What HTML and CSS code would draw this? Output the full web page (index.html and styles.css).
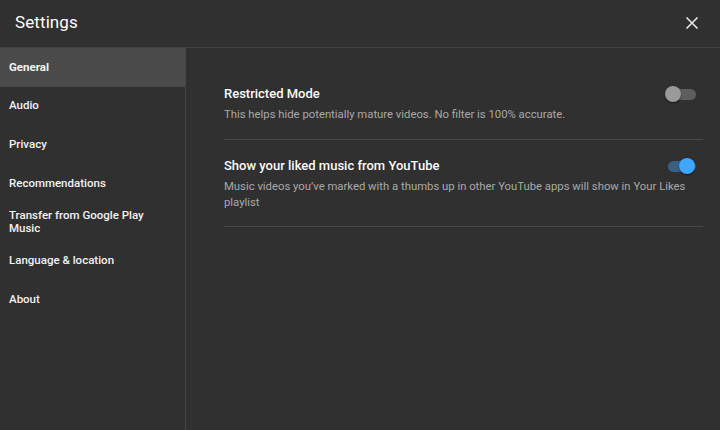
FILE: index.html
```html
<!DOCTYPE html>
<html>
<head>
<meta charset="utf-8">
<link rel="stylesheet" href="styles.css">
</head>
<body>
<div class="dialog">
  <header class="header">
    <h1 class="title">Settings</h1>
    <button class="close" aria-label="Close">
      <svg width="14" height="14" viewBox="0 0 14 14"><path d="M1.5 1.5 L12.5 12.5 M12.5 1.5 L1.5 12.5" stroke="#e8e8e8" stroke-width="1.6" fill="none"/></svg>
    </button>
  </header>
  <div class="body">
    <nav class="nav">
      <div class="nav-item active">General</div>
      <div class="nav-item">Audio</div>
      <div class="nav-item">Privacy</div>
      <div class="nav-item">Recommendations</div>
      <div class="nav-item two">Transfer from Google Play Music</div>
      <div class="nav-item">Language &amp; location</div>
      <div class="nav-item">About</div>
    </nav>
    <main class="content">
      <div class="setting">
        <div class="s-head">
          <div class="s-title">Restricted Mode</div>
          <div class="toggle off"><span class="track"></span><span class="knob"></span></div>
        </div>
        <div class="s-desc">This helps hide potentially mature videos. No filter is 100% accurate.</div>
      </div>
      <div class="setting">
        <div class="s-head">
          <div class="s-title">Show your liked music from YouTube</div>
          <div class="toggle on"><span class="track"></span><span class="knob"></span></div>
        </div>
        <div class="s-desc">Music videos you’ve marked with a thumbs up in other YouTube apps will show in Your Likes playlist</div>
      </div>
    </main>
  </div>
</div>
</body>
</html>
```
FILE: styles.css
```css
* { box-sizing: border-box; }
html, body { margin: 0; padding: 0; }
body {
  width: 720px;
  height: 430px;
  background: #303030;
  font-family: Roboto, "Noto Sans", sans-serif;
  color: #fff;
  overflow: hidden;
}
.dialog { display: flex; flex-direction: column; height: 430px; }
.header {
  height: 48px;
  display: flex;
  align-items: center;
  justify-content: space-between;
  padding: 0 21px 0 15px;
  border-bottom: 1px solid #434343;
  flex: none;
}
.title { margin: 0; font-size: 17px; font-weight: 400; letter-spacing: 0.1px; padding-bottom: 3px; }
.close { background: none; border: 0; padding: 0; width: 14px; height: 14px; display: flex; margin-bottom: 2px; }
.body { display: flex; flex: 1; }
.nav {
  width: 186px;
  border-right: 1px solid #444;
  flex: none;
}
.nav-item {
  height: 38.7px;
  display: flex;
  align-items: center;
  padding: 0 9px;
  font-size: 11.5px;
  font-weight: 500;
  color: #f2f2f2;
  line-height: 13px;
  padding-bottom: 1px;
}
.nav-item.active { background: #4b4b4b; font-weight: 700; height: 39px; }
.nav-item.two { padding-right: 30px; }
.content { flex: 1; padding: 29px 17px 0 38px; }
.setting {
  border-bottom: 1px solid #474747;
  padding: 8px 0 16px;
}
.setting + .setting { padding-top: 17px; padding-bottom: 15px; }
.s-head { display: flex; justify-content: space-between; align-items: flex-start; }
.s-title { font-size: 13px; font-weight: 500; color: #fafafa; line-height: 18px; }
.s-desc { font-size: 11.3px; color: #a9a9a9; line-height: 16px; margin-top: 4px; }
.toggle { position: relative; width: 32px; height: 18px; margin-top: 0; margin-right: 6px; flex: none; }
.track { position: absolute; left: 3px; top: 4px; width: 28px; height: 11px; border-radius: 6px; }
.knob { position: absolute; top: 1px; width: 16px; height: 16px; border-radius: 50%; box-shadow: 0 1px 2px rgba(0,0,0,0.5); }
.toggle.off .track { background: #5e5e5e; }
.toggle.off .knob { left: 0; background: #9a9a9a; }
.toggle.on .track { background: #3b5f82; }
.toggle.on .knob { left: 14px; background: #3ea6ff; }
```
